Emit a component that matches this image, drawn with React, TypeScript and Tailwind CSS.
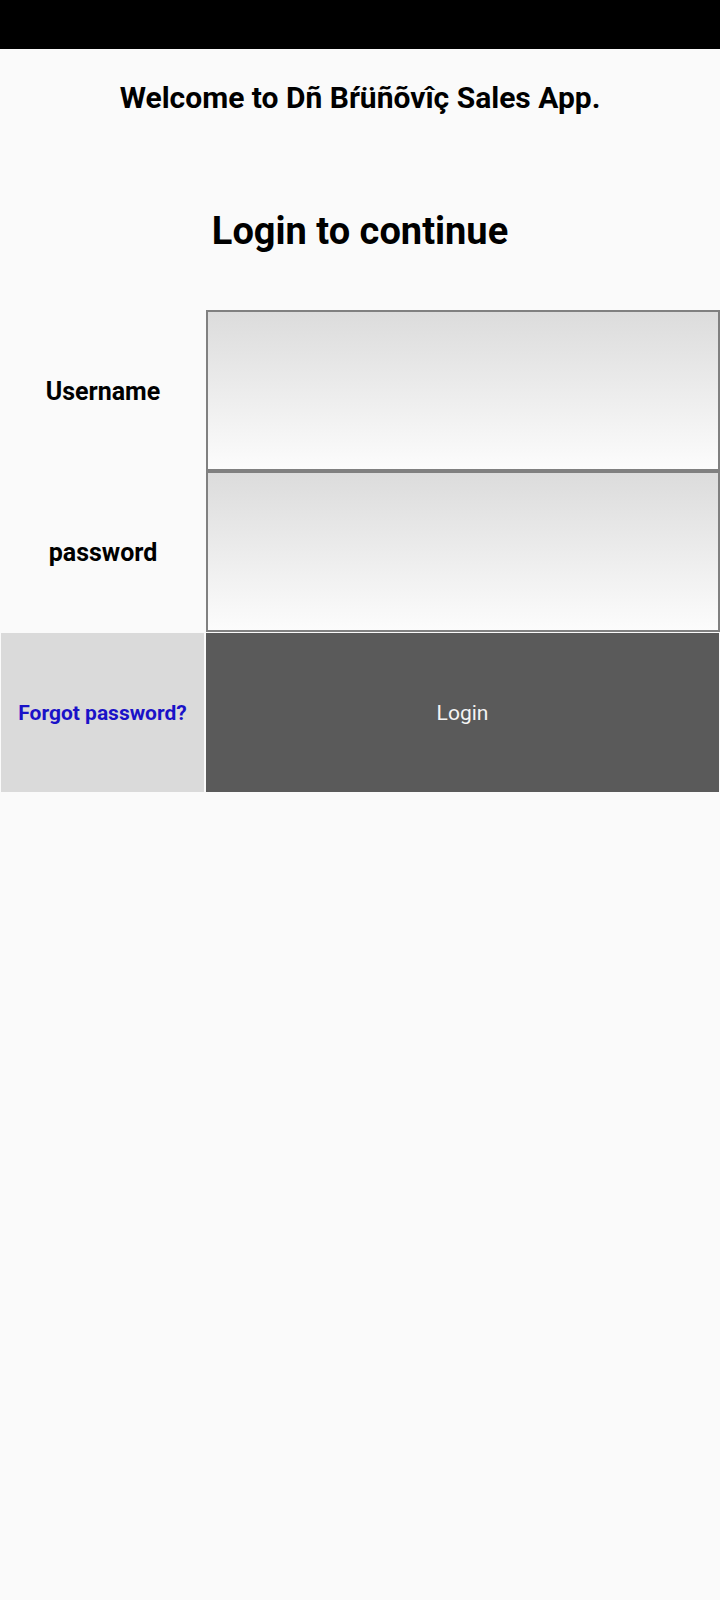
import React from "react";

export default function App() {
  return (
    <div className="min-h-[1600px] bg-[#fafafa]" style={{ fontFamily: "Roboto, 'Liberation Sans', sans-serif" }}>
      <div className="h-[49px] bg-black" />
      <h1 className="mt-[31px] text-center text-[30px] font-bold leading-[35px] text-black">
        Welcome to Dñ Bŕüñõvîç Sales App.
      </h1>
      <h2 className="mt-[94px] text-center text-[38px] font-bold leading-[44px] text-black">
        Login to continue
      </h2>
      <div className="mt-[57px]">
        <div className="flex h-[161px]">
          <div className="flex w-[206px] items-center justify-center pt-[2px] text-[25px] font-bold text-black">
            Username
          </div>
          <input
            className="h-full flex-1 border-2 border-[#808080] bg-gradient-to-b from-[#dcdcdc] to-[#fcfcfc] outline-none"
            type="text"
          />
        </div>
        <div className="flex h-[161px]">
          <div className="flex w-[206px] items-center justify-center pt-[2px] text-[25px] font-bold text-black">
            password
          </div>
          <input
            className="h-full flex-1 border-2 border-[#808080] bg-gradient-to-b from-[#dcdcdc] to-[#fcfcfc] outline-none"
            type="password"
          />
        </div>
        <div className="mt-[1px] flex h-[159px] gap-[2px] px-[1px]">
          <div className="flex w-[203px] items-center justify-center bg-[#dadada] pt-[3px] text-[21px] font-bold text-[#1a12c8]">
            Forgot password?
          </div>
          <button className="flex flex-1 items-center justify-center bg-[#5a5a5a] pt-[3px] text-[21px] text-[#f4f4f4]">
            Login
          </button>
        </div>
      </div>
    </div>
  );
}
